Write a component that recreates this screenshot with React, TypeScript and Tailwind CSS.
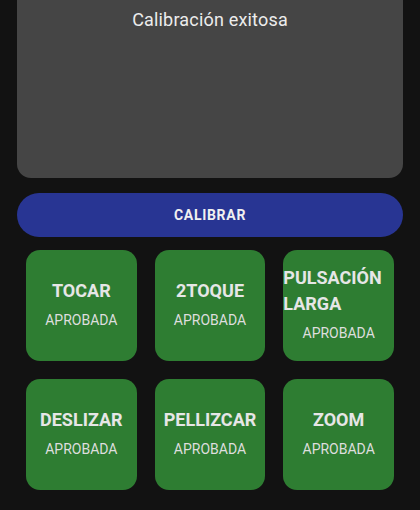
import React from "react";

const tiles = ["TOCAR", "2TOQUE", "PULSACIÓN LARGA", "DESLIZAR", "PELLIZCAR", "ZOOM"];

function Tile({ title }: { title: string }) {
  return (
    <div className="h-[111px] rounded-[14px] bg-[#2e7d32] flex flex-col items-stretch justify-center text-center pb-[5px]">
      <div>
        <span className="inline-block max-w-full text-left align-top text-[18px] leading-[26px] font-bold text-[#e6e6e6]">
          {title}
        </span>
      </div>
      <div className="mt-[8px] text-[14px] leading-[16px] text-[#dedede]">APROBADA</div>
    </div>
  );
}

export default function App() {
  return (
    <div
      className="w-[420px] h-[510px] bg-[#121212] overflow-hidden"
      style={{ fontFamily: "Roboto, 'Noto Sans', sans-serif" }}
    >
      <div className="px-[17px]">
        <div className="h-[178px] rounded-b-[14px] bg-[#454545] flex justify-center pt-[7px]">
          <span className="text-[18px] leading-[26px] tracking-[0.01em] text-[#ececec]">Calibración exitosa</span>
        </div>
        <div className="mt-[15px] h-[44px] rounded-full bg-[#283593] flex items-center justify-center">
          <span className="text-[14px] font-bold tracking-[0.05em] text-[#f0f0f0]">CALIBRAR</span>
        </div>
      </div>
      <div className="mt-[13px] px-[26px] grid grid-cols-3 gap-x-[18px] gap-y-[18px]">
        {tiles.map((t) => (
          <Tile key={t} title={t} />
        ))}
      </div>
    </div>
  );
}
